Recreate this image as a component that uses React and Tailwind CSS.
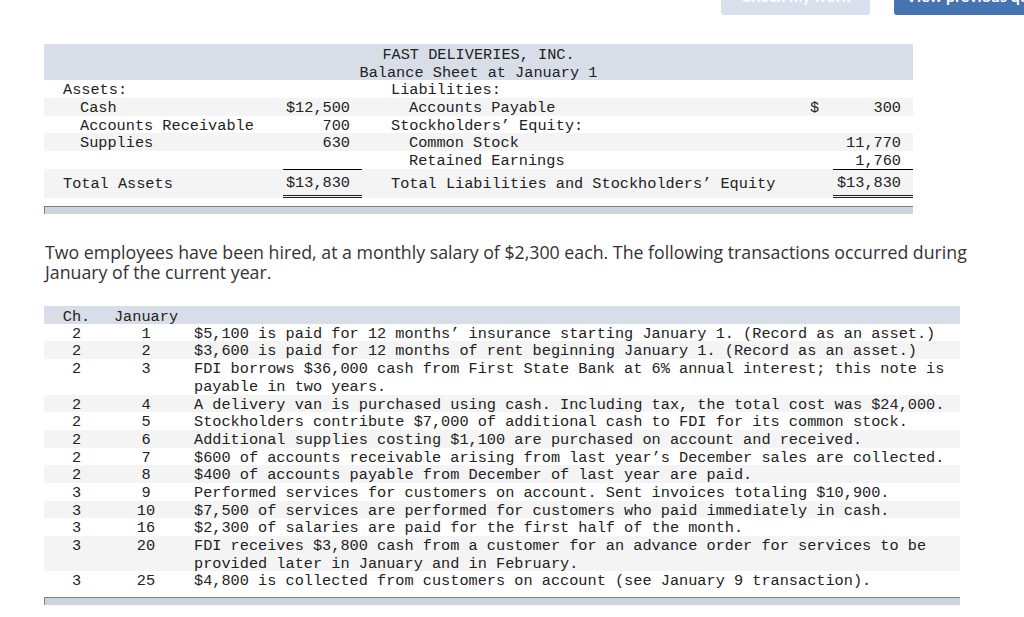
import React from 'react';

const mono = "font-['Liberation_Mono',monospace] text-[15.25px] text-[#222]";
const bsCols = 'grid grid-cols-[239px_79px_438px_33px_80px]';
const txCols = 'grid grid-cols-[65px_74px_777px]';

const transactions = [
  ['2', '1', ['$5,100 is paid for 12 months’ insurance starting January 1. (Record as an asset.)']],
  ['2', '2', ['$3,600 is paid for 12 months of rent beginning January 1. (Record as an asset.)']],
  ['2', '3', ['FDI borrows $36,000 cash from First State Bank at 6% annual interest; this note is', 'payable in two years.']],
  ['2', '4', ['A delivery van is purchased using cash. Including tax, the total cost was $24,000.']],
  ['2', '5', ['Stockholders contribute $7,000 of additional cash to FDI for its common stock.']],
  ['2', '6', ['Additional supplies costing $1,100 are purchased on account and received.']],
  ['2', '7', ['$600 of accounts receivable arising from last year’s December sales are collected.']],
  ['2', '8', ['$400 of accounts payable from December of last year are paid.']],
  ['3', '9', ['Performed services for customers on account. Sent invoices totaling $10,900.']],
  ['3', '10', ['$7,500 of services are performed for customers who paid immediately in cash.']],
  ['3', '16', ['$2,300 of salaries are paid for the first half of the month.']],
  ['3', '20', ['FDI receives $3,800 cash from a customer for an advance order for services to be', 'provided later in January and in February.']],
  ['3', '25', ['$4,800 is collected from customers on account (see January 9 transaction).']],
];

function BsRow({ gray, a, b, c, d, e, indentA, indentC }) {
  return (
    <div className={`${bsCols} h-[17.75px] pt-[2px] leading-[17.75px] ${gray ? 'bg-[#f4f4f4]' : 'bg-white'}`}>
      <div className={indentA ? 'pl-[36px]' : 'pl-[19px]'}>{a}</div>
      <div className="text-right pr-[12px]">{b}</div>
      <div className={indentC ? 'pl-[47px]' : 'pl-[29px]'}>{c}</div>
      <div className="pl-[10px]">{d}</div>
      <div className="text-right pr-[12px]">{e}</div>
    </div>
  );
}

function BottomBar({ width }) {
  return <div className={`${width} h-[8px] bg-[#ccd4df] border-t border-l border-[#808080]`} />;
}

export default function App() {
  return (
    <div className="w-[1024px] h-[617px] overflow-hidden bg-white">
      {/* top buttons, cut off by the viewport */}
      <div className="flex gap-[24px] pl-[721px] -mt-[24px]">
        <div className="shrink-0 w-[149px] h-[39px] rounded-[3px] bg-[#d7e0ec] text-white font-['Lato',sans-serif] font-bold text-[16px] flex items-center justify-center">
          Check my work
        </div>
        <div className="shrink-0 w-[220px] h-[39px] rounded-[3px] bg-[#4673b2] text-white font-['Lato',sans-serif] font-bold text-[16px] flex items-center pl-[12px]">
          View previous question
        </div>
      </div>

      {/* balance sheet */}
      <div className={`ml-[44px] mt-[29px] w-[869px] ${mono}`}>
        <div className="bg-[#d8dee8] text-center leading-[18px] h-[36px] pt-[2px]">
          <div>FAST DELIVERIES, INC.</div>
          <div>Balance Sheet at January 1</div>
        </div>
        <BsRow a="Assets:" c="Liabilities:" />
        <BsRow gray indentA indentC a="Cash" b="$12,500" c="Accounts Payable" d="$" e="300" />
        <BsRow indentA a="Accounts Receivable" b="700" c="Stockholders’ Equity:" />
        <BsRow gray indentA indentC a="Supplies" b="630" c="Common Stock" e="11,770" />
        <BsRow indentC c="Retained Earnings" e="1,760" />
        <div className={`${bsCols} h-[29px] bg-[#f4f4f4] items-stretch`}>
          <div className="pl-[19px] pt-[2px] flex items-center">Total Assets</div>
          <div className="pr-[12px] pt-[2px] flex items-center justify-end border-t border-black border-b-[3px] border-b-[#222] border-double">$13,830</div>
          <div className="pl-[29px] pt-[2px] flex items-center">Total Liabilities and Stockholders’ Equity</div>
          <div />
          <div className="pr-[12px] pt-[2px] flex items-center justify-end border-t border-black border-b-[3px] border-b-[#222] border-double">$13,830</div>
        </div>
        <div className="h-[8px]" />
        <BottomBar width="w-[869px]" />
      </div>

      <p className="ml-[45px] mt-[28px] w-[930px] font-['Open_Sans',sans-serif] text-[17.75px] leading-[20px] text-[#333]">
        Two employees have been hired, at a monthly salary of $2,300 each. The following transactions occurred during January of the current year.
      </p>

      {/* transactions */}
      <div className={`ml-[44px] mt-[24px] w-[916px] ${mono}`}>
        <div className={`${txCols} bg-[#d8dee8] h-[18px] pt-[2px] leading-[18px]`}>
          <div className="text-center">Ch.</div>
          <div className="text-center">January</div>
          <div />
        </div>
        {transactions.map(([ch, day, lines], i) => (
          <div key={day} className={`${txCols} pt-[2px] leading-[17.7px] ${lines.length > 1 ? 'h-[35.4px]' : 'h-[17.7px]'} ${i % 2 ? 'bg-[#f4f4f4]' : 'bg-white'}`}>
            <div className="text-center">{ch}</div>
            <div className="text-center">{day}</div>
            <div className="pl-[11px] pr-[10px]">
              {lines.map(l => <div key={l}>{l}</div>)}
            </div>
          </div>
        ))}
        <div className="h-[8px]" />
        <BottomBar width="w-[916px]" />
      </div>
    </div>
  );
}
